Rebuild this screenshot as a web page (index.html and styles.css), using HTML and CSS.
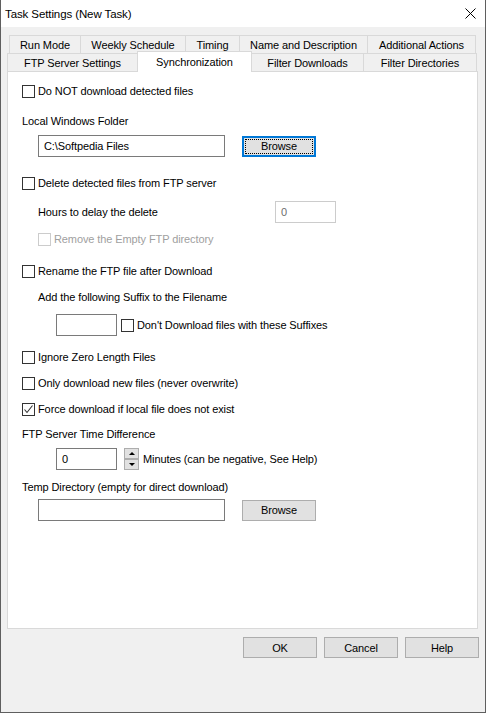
FILE: index.html
```html
<!DOCTYPE html>
<html lang="en">
<head>
    <meta charset="UTF-8">
    <title>Task Settings (New Task)</title>
    <link rel="stylesheet" href="styles.css">
</head>
<body>
    <div class="window">
        <div class="titlebar">
            <span class="title">Task Settings (New Task)</span>
            <svg class="close" width="11" height="11" viewBox="0 0 11 11">
                <path d="M0.5 0.5 L10.5 10.5 M10.5 0.5 L0.5 10.5" stroke="#000" stroke-width="1" fill="none"/>
            </svg>
        </div>

        <div class="tabs">
            <div class="tab-row back">
                <div class="tab run-mode">Run Mode</div>
                <div class="tab weekly">Weekly Schedule</div>
                <div class="tab timing">Timing</div>
                <div class="tab name-desc">Name and Description</div>
                <div class="tab additional">Additional Actions</div>
            </div>
            <div class="tab-row">
                <div class="tab ftp-server">FTP Server Settings</div>
                <div class="tab sync active">Synchronization</div>
                <div class="tab filter-dl">Filter Downloads</div>
                <div class="tab filter-dir">Filter Directories</div>
            </div>
        </div>

        <div class="panel">
            <div class="check gap13"><span class="box"></span>Do NOT download detected files</div>

            <div class="label gap17">Local Windows Folder</div>
            <div class="field-row indent gap7">
                <div class="input wide">C:\Softpedia Files</div>
                <button class="btn focused">Browse</button>
            </div>

            <div class="check gap20"><span class="box"></span>Delete detected files from FTP server</div>
            <div class="field-row indent gap11">
                <span class="hours-label">Hours to delay the delete</span>
                <div class="input small disabled">0</div>
            </div>
            <div class="check indent disabled gap10"><span class="box"></span>Remove the Empty FTP directory</div>

            <div class="check gap19"><span class="box"></span>Rename the FTP file after Download</div>
            <div class="label indent gap13">Add the following Suffix to the Filename</div>
            <div class="field-row indent2 gap10">
                <div class="input small"></div>
                <div class="check inline"><span class="box"></span>Don't Download files with these Suffixes</div>
            </div>

            <div class="check gap15"><span class="box"></span>Ignore Zero Length Files</div>
            <div class="check gap13"><span class="box"></span>Only download new files (never overwrite)</div>
            <div class="check gap13"><span class="box checked">
                <svg width="11" height="11" viewBox="0 0 11 11"><path d="M1.5 5.5 L4 8.5 L9.5 1.5" stroke="#333" stroke-width="1.1" fill="none"/></svg>
            </span>Force download if local file does not exist</div>

            <div class="label gap12">FTP Server Time Difference</div>
            <div class="field-row indent2 gap7">
                <div class="input small">0</div>
                <div class="spin">
                    <span class="spin-btn"><i class="arrow up"></i></span>
                    <span class="spin-btn"><i class="arrow down"></i></span>
                </div>
                <span class="spin-label">Minutes (can be negative, See Help)</span>
            </div>

            <div class="label gap11">Temp Directory (empty for direct download)</div>
            <div class="field-row indent gap5">
                <div class="input wide"></div>
                <button class="btn">Browse</button>
            </div>
        </div>

        <div class="dialog-buttons">
            <button class="btn">OK</button>
            <button class="btn">Cancel</button>
            <button class="btn">Help</button>
        </div>
    </div>
</body>
</html>
```

FILE: styles.css
```css
body {
    margin: 0;
    font-family: "Liberation Sans", Arial, sans-serif;
    font-size: 11px;
    letter-spacing: -0.1px;
    color: #000;
}
.window {
    width: 486px;
    height: 713px;
    box-sizing: border-box;
    border: 1px solid #5f5f5f;
    border-top: none;
    background: #f0f0f0;
    display: flex;
    flex-direction: column;
}
.titlebar {
    height: 27px;
    flex-shrink: 0;
    background: #fff;
    display: flex;
    align-items: center;
    justify-content: space-between;
    padding: 0 9px 0 4px;
}
.title {
    font-size: 11.5px;
}

/* tabs */
.tabs {
    margin: 8px 0 0 6px;
}
.tab-row {
    display: flex;
}
.tab-row.back {
    margin-left: 2px;
}
.tab {
    box-sizing: border-box;
    height: 18px;
    border: 1px solid #d9d9d9;
    border-bottom: none;
    margin-right: -1px;
    background: #f0f0f0;
    display: flex;
    align-items: center;
    justify-content: center;
    white-space: nowrap;
}
.tab.active {
    height: 21px;
    margin-top: -2px;
    margin-bottom: -1px;
    background: #fff;
    position: relative;
    z-index: 1;
}
.run-mode { width: 72px; }
.weekly { width: 106px; }
.timing { width: 55px; }
.name-desc { width: 129px; }
.additional { width: 109px; }
.ftp-server { width: 131px; }
.sync { width: 115px; }
.filter-dl { width: 113px; }
.filter-dir { width: 114px; }

/* page */
.panel {
    margin-left: 6px;
    width: 471px;
    height: 558px;
    flex-shrink: 0;
    box-sizing: border-box;
    border: 1px solid #d9d9d9;
    background: #fff;
    padding-left: 14px;
    display: flex;
    flex-direction: column;
    align-items: flex-start;
}
.label {
    height: 13px;
    line-height: 13px;
}
.check {
    height: 13px;
    line-height: 13px;
    display: flex;
    align-items: center;
    gap: 3px;
    white-space: nowrap;
}
.box {
    box-sizing: border-box;
    width: 13px;
    height: 13px;
    border: 1px solid #333;
    background: #fff;
    display: flex;
    align-items: center;
    justify-content: center;
}
.check.disabled {
    color: #a0a0a0;
}
.check.disabled .box {
    border-color: #cccccc;
}
.check.inline {
    margin-left: 4px;
}
.indent { margin-left: 16px; }
.indent2 { margin-left: 34px; }

.gap5 { margin-top: 5px; }
.gap7 { margin-top: 7px; }
.gap10 { margin-top: 10px; }
.gap11 { margin-top: 11px; }
.gap12 { margin-top: 12px; }
.gap13 { margin-top: 13px; }
.gap15 { margin-top: 15px; }
.gap17 { margin-top: 17px; }
.gap19 { margin-top: 19px; }
.gap20 { margin-top: 20px; }

.field-row {
    display: flex;
    align-items: center;
    height: 22px;
}
.input {
    box-sizing: border-box;
    height: 22px;
    border: 1px solid #7a7a7a;
    background: #fff;
    padding: 0 5px;
    line-height: 20px;
    white-space: nowrap;
}
.input.wide { width: 187px; }
.input.small { width: 61px; }
.input.disabled {
    border-color: #cccccc;
    color: #6d6d6d;
}
.hours-label {
    width: 237px;
}

.btn {
    box-sizing: border-box;
    width: 74px;
    height: 21px;
    padding: 0;
    border: 1px solid #adadad;
    background: #e1e1e1;
    font-family: inherit;
    font-size: 11px;
    letter-spacing: -0.1px;
    color: #000;
}
.field-row .btn {
    margin-left: 17px;
}
.btn.focused {
    border-color: #0078d7;
    box-shadow: inset 0 0 0 1px #0078d7;
    outline: 1px dotted #000;
    outline-offset: -4px;
}

.spin {
    display: flex;
    flex-direction: column;
    width: 15px;
    height: 22px;
    margin-left: 7px;
}
.spin-btn {
    box-sizing: border-box;
    height: 11px;
    border: 1px solid #adadad;
    background: #e1e1e1;
    display: flex;
    align-items: center;
    justify-content: center;
}
.arrow {
    width: 0;
    height: 0;
    border-left: 3px solid transparent;
    border-right: 3px solid transparent;
}
.arrow.up { border-bottom: 3px solid #000; }
.arrow.down { border-top: 3px solid #000; }
.spin-label {
    margin-left: 4px;
}

.dialog-buttons {
    display: flex;
    justify-content: flex-end;
    gap: 7px;
    padding: 8px 6px 0 0;
}
```
